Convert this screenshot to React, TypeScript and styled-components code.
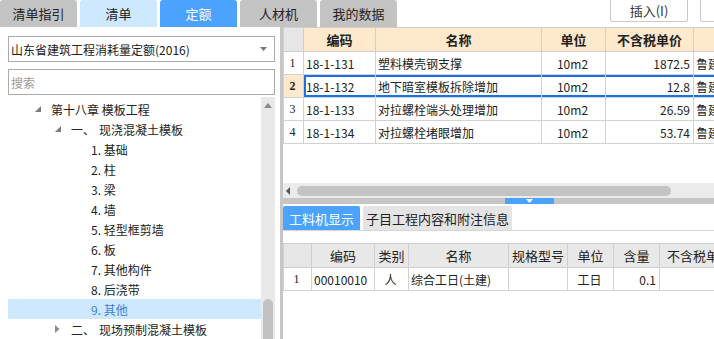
import React from "react";
import styled, { createGlobalStyle } from "styled-components";

const Global = createGlobalStyle`
  html, body { margin: 0; padding: 0; background: #fff; }
  body { font-family: "Noto Sans CJK SC", "Noto Sans", sans-serif; color: #222; }
  * { box-sizing: border-box; }
`;

const Screen = styled.div`
  width: 714px;
  height: 339px;
  overflow: hidden;
  display: flex;
  flex-direction: column;
  background: #fff;
`;

const TopBar = styled.div`
  height: 27px;
  flex-shrink: 0;
  display: flex;
  align-items: stretch;
  gap: 3px;
`;

type TabKind = "gray" | "light" | "active";
const Tab = styled.div<{ $kind: TabKind }>`
  width: 77px;
  display: flex;
  align-items: center;
  justify-content: center;
  font-size: 13px;
  border-radius: 3px 3px 0 0;
  background: ${(p) => (p.$kind === "active" ? "#4ba3fd" : p.$kind === "light" ? "#cde8ff" : "#c3c3c3")};
  color: ${(p) => (p.$kind === "active" ? "#fff" : "#222")};
`;

const ToolGroup = styled.div`
  margin-left: auto;
  margin-right: -66px;
  display: flex;
  gap: 12px;
  align-items: flex-start;
`;

const ToolButton = styled.div<{ $w: number }>`
  width: ${(p) => p.$w}px;
  height: 22px;
  border: 1px solid #cacaca;
  border-top: none;
  border-radius: 0 0 3px 3px;
  background: #fff;
  font-size: 13px;
  display: flex;
  align-items: center;
  justify-content: center;
  color: #333;
`;

const Body = styled.div`
  flex: 1;
  display: flex;
  min-height: 0;
`;

const LeftPanel = styled.div`
  width: 280px;
  flex-shrink: 0;
  display: flex;
  flex-direction: column;
  padding: 9px 5px 0 8px;
`;

const Select = styled.div`
  height: 26px;
  border: 1px solid #ababab;
  display: flex;
  align-items: center;
  justify-content: space-between;
  padding: 0 7px 0 2px;
  font-size: 12px;
  color: #222;
`;

const Search = styled.div`
  margin-top: 7px;
  height: 26px;
  border: 1px solid #ababab;
  display: flex;
  align-items: center;
  padding-left: 2px;
  font-size: 12px;
  color: #9a9a9a;
`;

const TreeArea = styled.div`
  flex: 1;
  margin-top: 2px;
  display: flex;
  min-height: 0;
`;

const TreeList = styled.div`
  flex: 1;
  padding-top: 2px;
`;

const TreeRow = styled.div<{ $level: number; $selected?: boolean }>`
  height: 20px;
  display: flex;
  align-items: center;
  padding-left: ${(p) => 27 + p.$level * 20}px;
  font-size: 12px;
  background: ${(p) => (p.$selected ? "#cde8ff" : "transparent")};
  color: ${(p) => (p.$selected ? "#3c7fd9" : "#222")};
  white-space: nowrap;
`;

const Toggle = styled.span`
  width: 16px;
  height: 20px;
  display: flex;
  align-items: center;
  flex-shrink: 0;
`;

const Gap = styled.span<{ $w: number }>`
  display: inline-block;
  width: ${(p) => p.$w}px;
`;

const VScroll = styled.div`
  width: 14px;
  flex-shrink: 0;
  background: #e9e9e9;
  display: flex;
  flex-direction: column;
  align-items: center;
`;

const VThumb = styled.div`
  margin-top: auto;
  width: 10px;
  height: 40px;
  background: #c2c2c2;
  border-radius: 5px 5px 0 0;
`;

const RightPanel = styled.div`
  flex: 1;
  min-width: 0;
  border-left: 3px solid #c6c6c6;
  display: flex;
  flex-direction: column;
  overflow: hidden;
`;

const TopGridArea = styled.div`
  height: 156px;
  flex-shrink: 0;
  overflow: hidden;
`;

const Grid = styled.table<{ $w: number }>`
  border-collapse: collapse;
  table-layout: fixed;
  width: ${(p) => p.$w}px;
`;

const HeadCell = styled.th<{ $num?: boolean; $tone: "orange" | "gray" }>`
  height: 24px;
  padding: 0;
  border: 1px solid #cfcfcf;
  font-size: 13px;
  font-weight: ${(p) => (p.$tone === "orange" ? 700 : 400)};
  color: #222;
  text-align: center;
  white-space: nowrap;
  overflow: hidden;
  background: ${(p) => (p.$num ? "#e6e6e6" : p.$tone === "orange" ? "#fee9cc" : "#e8e8e8")};
`;

type Align = "left" | "center" | "right";
const Cell = styled.td<{ $align?: Align; $num?: boolean; $numSel?: boolean; $sel?: boolean; $selFirst?: boolean }>`
  height: 23px;
  padding: 0 ${(p) => (p.$align === "right" ? "3px" : "2px")} 0 ${(p) => (p.$align === "left" ? "2px" : "0")};
  border: 1px solid #d2d2d2;
  font-size: 12px;
  text-align: ${(p) => p.$align || "left"};
  white-space: nowrap;
  overflow: hidden;
  font-family: ${(p) => (p.$num ? '"Liberation Serif", "Noto Sans CJK SC", serif' : '"Noto Sans CJK SC", sans-serif')};
  font-weight: ${(p) => (p.$numSel ? 700 : 400)};
  background: ${(p) => (p.$numSel ? "#fee9cc" : "#fff")};
  box-shadow: ${(p) =>
    p.$sel
      ? `inset 0 2px 0 #1b70e6, inset 0 -2px 0 #1b70e6${p.$selFirst ? ", inset 2px 0 0 #1b70e6" : ""}`
      : "none"};
`;

const HScroll = styled.div`
  height: 15px;
  flex-shrink: 0;
  background: #ebebeb;
  display: flex;
  align-items: center;
  padding-left: 3px;
  gap: 7px;
`;

const HThumb = styled.div`
  width: 374px;
  height: 10px;
  border-radius: 5px;
  background: #c3c3c3;
`;

const SplitBar = styled.div`
  height: 6px;
  flex-shrink: 0;
  background: #c6c6c6;
  display: flex;
  padding-left: 222px;
`;

const SplitHandle = styled.div`
  width: 49px;
  background: #4ba3fd;
  display: flex;
  justify-content: center;
  align-items: flex-start;
  padding-top: 1px;
`;

const LowerTabs = styled.div`
  margin-top: 2px;
  height: 25px;
  flex-shrink: 0;
  display: flex;
  gap: 3px;
  border-bottom: 1px solid #d6d6d6;
`;

const LowerTab = styled.div<{ $active?: boolean }>`
  width: ${(p) => (p.$active ? 77 : 149)}px;
  height: 24px;
  display: flex;
  align-items: center;
  justify-content: center;
  font-size: 13px;
  border-radius: 2px 2px 0 0;
  background: ${(p) => (p.$active ? "#4ba3fd" : "#e4e4e4")};
  color: ${(p) => (p.$active ? "#fff" : "#222")};
`;

const LowerGridArea = styled.div`
  margin-top: 12px;
  flex: 1;
  overflow: hidden;
`;

const ExpandedIcon = () => (
  <svg width="6" height="6" viewBox="0 0 6 6">
    <polygon points="6,0 6,6 0,6" fill="#7a7a7a" />
  </svg>
);

const CollapsedIcon = () => (
  <svg width="5" height="8" viewBox="0 0 5 8">
    <polygon points="0,0 4.5,4 0,8" fill="#8a8a8a" />
  </svg>
);

const tree = [
  { level: 0, toggle: "open", text: "第十八章 模板工程" },
  { level: 1, toggle: "open", text: "一、", rest: "现浇混凝土模板" },
  { level: 2, text: "1. 基础" },
  { level: 2, text: "2. 柱" },
  { level: 2, text: "3. 梁" },
  { level: 2, text: "4. 墙" },
  { level: 2, text: "5. 轻型框剪墙" },
  { level: 2, text: "6. 板" },
  { level: 2, text: "7. 其他构件" },
  { level: 2, text: "8. 后浇带" },
  { level: 2, text: "9. 其他", selected: true },
  { level: 1, toggle: "closed", text: "二、", rest: "现场预制混凝土模板" },
];

const topRows = [
  { n: "1", code: "18-1-131", name: "塑料模壳钢支撑", unit: "10m2", price: "1872.5" },
  { n: "2", code: "18-1-132", name: "地下暗室模板拆除增加", unit: "10m2", price: "12.8", sel: true },
  { n: "3", code: "18-1-133", name: "对拉螺栓端头处理增加", unit: "10m2", price: "26.59" },
  { n: "4", code: "18-1-134", name: "对拉螺栓堵眼增加", unit: "10m2", price: "53.74" },
];

const topCols = [20, 72, 166, 64, 88, 80];
const lowCols = [28, 63, 34, 100, 59, 46, 46, 80];

export default function App() {
  return (
    <Screen>
      <Global />
      <TopBar>
        <Tab $kind="gray">清单指引</Tab>
        <Tab $kind="light">清单</Tab>
        <Tab $kind="active">定额</Tab>
        <Tab $kind="gray">人材机</Tab>
        <Tab $kind="gray">我的数据</Tab>
        <ToolGroup>
          <ToolButton $w={78}>插入(I)</ToolButton>
          <ToolButton $w={80} />
        </ToolGroup>
      </TopBar>
      <Body>
        <LeftPanel>
          <Select>
            <span>山东省建筑工程消耗量定额(2016)</span>
            <svg width="7" height="4" viewBox="0 0 7 4">
              <polygon points="0,0 7,0 3.5,4" fill="#777" />
            </svg>
          </Select>
          <Search>搜索</Search>
          <TreeArea>
            <TreeList>
              {tree.map((t, i) => (
                <TreeRow key={i} $level={t.level} $selected={t.selected}>
                  <Toggle>
                    {t.toggle === "open" ? <ExpandedIcon /> : t.toggle === "closed" ? <CollapsedIcon /> : null}
                  </Toggle>
                  {t.text}
                  {t.rest ? (
                    <>
                      <Gap $w={4} />
                      {t.rest}
                    </>
                  ) : null}
                </TreeRow>
              ))}
            </TreeList>
            <VScroll>
              <svg width="8" height="10" viewBox="0 0 8 10" style={{ marginTop: 3 }}>
                <polygon points="0,8 8,8 4,3" fill="#8a8a8a" />
              </svg>
              <VThumb />
            </VScroll>
          </TreeArea>
        </LeftPanel>
        <RightPanel>
          <TopGridArea>
            <Grid $w={topCols.reduce((a, b) => a + b, 0)}>
              <colgroup>
                {topCols.map((w, i) => (
                  <col key={i} style={{ width: w }} />
                ))}
              </colgroup>
              <thead>
                <tr>
                  <HeadCell $num $tone="orange" />
                  <HeadCell $tone="orange">编码</HeadCell>
                  <HeadCell $tone="orange">名称</HeadCell>
                  <HeadCell $tone="orange">单位</HeadCell>
                  <HeadCell $tone="orange">不含税单价</HeadCell>
                  <HeadCell $tone="orange" />
                </tr>
              </thead>
              <tbody>
                {topRows.map((r) => (
                  <tr key={r.n}>
                    <Cell $align="center" $num $numSel={r.sel}>
                      {r.n}
                    </Cell>
                    <Cell $align="left" $sel={r.sel} $selFirst={r.sel}>
                      {r.code}
                    </Cell>
                    <Cell $align="left" $sel={r.sel}>
                      {r.name}
                    </Cell>
                    <Cell $align="center" $sel={r.sel}>
                      {r.unit}
                    </Cell>
                    <Cell $align="right" $sel={r.sel}>
                      {r.price}
                    </Cell>
                    <Cell $align="left" $sel={r.sel}>
                      鲁建筑
                    </Cell>
                  </tr>
                ))}
              </tbody>
            </Grid>
          </TopGridArea>
          <HScroll>
            <svg width="4" height="8" viewBox="0 0 4 8">
              <polygon points="4,0 4,8 0,4" fill="#555" />
            </svg>
            <HThumb />
          </HScroll>
          <SplitBar>
            <SplitHandle>
              <svg width="7" height="4" viewBox="0 0 7 4">
                <polygon points="0,0 7,0 3.5,4" fill="#fff" />
              </svg>
            </SplitHandle>
          </SplitBar>
          <LowerTabs>
            <LowerTab $active>工料机显示</LowerTab>
            <LowerTab>子目工程内容和附注信息</LowerTab>
          </LowerTabs>
          <LowerGridArea>
            <Grid $w={lowCols.reduce((a, b) => a + b, 0)}>
              <colgroup>
                {lowCols.map((w, i) => (
                  <col key={i} style={{ width: w }} />
                ))}
              </colgroup>
              <thead>
                <tr>
                  <HeadCell $num $tone="gray" />
                  <HeadCell $tone="gray">编码</HeadCell>
                  <HeadCell $tone="gray">类别</HeadCell>
                  <HeadCell $tone="gray">名称</HeadCell>
                  <HeadCell $tone="gray">规格型号</HeadCell>
                  <HeadCell $tone="gray">单位</HeadCell>
                  <HeadCell $tone="gray">含量</HeadCell>
                  <HeadCell $tone="gray">不含税单价</HeadCell>
                </tr>
              </thead>
              <tbody>
                <tr>
                  <Cell $align="center" $num>1</Cell>
                  <Cell $align="left">00010010</Cell>
                  <Cell $align="center">人</Cell>
                  <Cell $align="left">综合工日(土建)</Cell>
                  <Cell $align="left" />
                  <Cell $align="center">工日</Cell>
                  <Cell $align="right">0.1</Cell>
                  <Cell $align="right">1</Cell>
                </tr>
              </tbody>
            </Grid>
          </LowerGridArea>
        </RightPanel>
      </Body>
    </Screen>
  );
}
